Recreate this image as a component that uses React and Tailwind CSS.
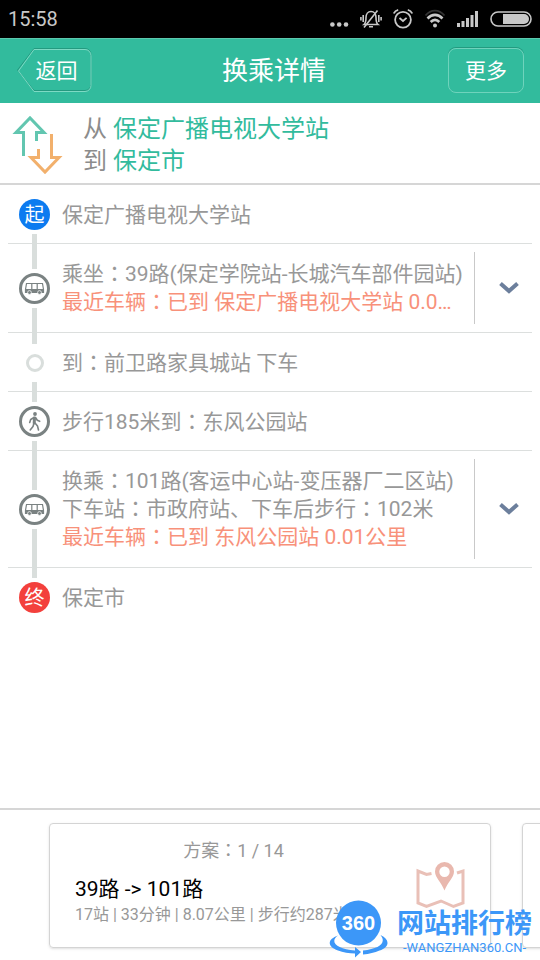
import { useState } from 'react';

const from = '保定广播电视大学站';
const to = '保定市';

const steps = [
  { id: 1, type: 'start', lines: ['保定广播电视大学站'] },
  {
    id: 2,
    type: 'bus',
    lines: ['乘坐：39路(保定学院站-长城汽车部件园站)'],
    nearest: '最近车辆：已到 保定广播电视大学站 0.01公里',
  },
  { id: 3, type: 'stop', lines: ['到：前卫路家具城站 下车'] },
  { id: 4, type: 'walk', lines: ['步行185米到：东风公园站'] },
  {
    id: 5,
    type: 'bus',
    lines: ['换乘：101路(客运中心站-变压器厂二区站)', '下车站：市政府站、下车后步行：102米'],
    nearest: '最近车辆：已到 东风公园站 0.01公里',
  },
  { id: 6, type: 'end', lines: ['保定市'] },
];

// The TC face centres the full-width colon in its cell
const Label = ({ text }) =>
  text.split('：').map((part, i) => (
    <span key={i}>
      {i > 0 && <span className="font-['Noto_Sans_CJK_TC',sans-serif] leading-none">：</span>}
      {part}
    </span>
  ));

const StatusBar = () => (
  <div className="flex h-[38px] items-center justify-between bg-black pr-2 pl-2 text-[#c8c8c8]">
    <span className="text-[20px] leading-none">15:58</span>
    <div className="flex items-center gap-[11px]">
      <svg className="h-5 w-[19px]" viewBox="0 0 19 20" fill="currentColor">
        <circle cx="2.4" cy="15.5" r="2.3" />
        <circle cx="9.2" cy="15.5" r="2.3" />
        <circle cx="16" cy="15.5" r="2.3" />
      </svg>
      <svg className="h-5 w-[22px]" viewBox="0 0 22 20" fill="none" stroke="currentColor" strokeWidth="1.6">
        <path d="M4 15.5h14c-1.8-1.5-2-3-2-7 0-3.500-2-6-5-6s-5 2.500-5 6c0 4-.2 5.500-2 7z" />
        <path d="M9 17.800h4M4 18.500L17.500 1.500M3.200 6v7M.9 8v3.500M18.800 6v7M21.100 8v3.500" />
      </svg>
      <svg className="h-5 w-5" viewBox="0 0 20 20" fill="none" stroke="currentColor" strokeWidth="1.8">
        <circle cx="10" cy="10.800" r="7.900" />
        <path d="M6.500 9l3.500 3 3.600-3.200M.8 4.500C1.600 2.700 3.300 1.300 5.200.9M19.200 4.500C18.400 2.700 16.700 1.300 14.800.9" />
      </svg>
      <svg className="h-5 w-[22px]" viewBox="0 0 22 20" fill="none" stroke="currentColor" strokeWidth="2.6">
        <path d="M1.500 6.500C7-.1 15 .1 20.500 6.500" stroke="#333" strokeWidth="1.8" />
        <path d="M3.500 9.500c4.500-4.800 10.500-4.800 15 0M6.700 13c2.600-2.800 6-2.800 8.600 0" />
        <circle cx="11" cy="16.500" r="2" fill="currentColor" stroke="none" />
      </svg>
      <svg className="h-5 w-[22px]" viewBox="0 0 22 20" fill="currentColor">
        <rect x="0" y="14" width="3" height="4" />
        <rect x="4.500" y="12" width="3" height="6" />
        <rect x="9" y="9" width="3" height="9" />
        <rect x="13.500" y="6" width="3" height="12" />
        <rect x="18" y="2" width="3" height="16" />
      </svg>
      <svg className="h-5 w-[42px]" viewBox="0 0 42 20">
        <rect x="1" y="3" width="40" height="14" rx="7" fill="none" stroke="currentColor" strokeWidth="1.6" />
        <path d="M13 5h21a5 5 0 0 1 0 10H13z" fill="currentColor" />
      </svg>
    </div>
  </div>
);

const Header = () => (
  <header className="flex h-[65px] items-center justify-between border-t border-[#5cc9ae] bg-[#32bb9d] px-4 pb-[2px] text-white">
    <button type="button" className="relative h-[46px] w-[76px] pt-[3px] pl-[5px] text-[21px]">
      <svg className="absolute inset-0" width="76" height="46" viewBox="0 0 76 46" fill="none">
        <path d="M18 1.500h51a6 6 0 0 1 6 6v30a6 6 0 0 1-6 6H18L1.500 23z" stroke="#249a80" />
        <path d="M18 2.500h51a6 6 0 0 1 6 6v30a6 6 0 0 1-6 6H18L2.500 24z" stroke="#7ddac4" />
      </svg>
      返回
    </button>
    <h1 className="pt-[3px] pl-2 text-[26px]">换乘详情</h1>
    <button
      type="button"
      className="h-[45px] w-[76px] rounded-lg border border-[#6fd3bc] pt-[3px] text-[21px] shadow-[0_-1px_0_#249a80]"
    >
      更多
    </button>
  </header>
);

const StepIcon = ({ type }) => {
  if (type === 'start' || type === 'end') {
    return (
      <span
        className={`flex size-[31px] items-center justify-center rounded-full text-[20px] leading-none text-white ${
          type === 'start' ? 'bg-[#0c7bf0]' : 'bg-[#f3403c]'
        }`}
      >
        {type === 'start' ? '起' : '终'}
      </span>
    );
  }
  if (type === 'stop') {
    return <span className="my-[6px] size-[18px] rounded-full border-3 border-[#d9dedc]" />;
  }
  return (
    <svg className="size-[31px]" viewBox="0 0 31 31" fill="none" stroke="#7a8282">
      <circle cx="15.500" cy="15.500" r="14" strokeWidth="3" />
      {type === 'bus' ? (
        <g>
          <path d="M7.500 10.500h16l1 6v3h-18v-3zM12.800 10.500v6M18.200 10.500v6" strokeWidth="1.200" />
          <path d="M6.500 16h18v3.500h-18z" fill="#7a8282" stroke="none" />
          <circle cx="10.500" cy="19.500" r="1.900" fill="#7a8282" stroke="#fff" strokeWidth=".7" />
          <circle cx="20.500" cy="19.500" r="1.900" fill="#7a8282" stroke="#fff" strokeWidth=".7" />
        </g>
      ) : (
        <g strokeLinecap="round" strokeLinejoin="round">
          <circle cx="16" cy="8" r="1.900" fill="#7a8282" stroke="none" />
          <path d="M15.500 12l-.3 5" strokeWidth="3" />
          <path d="M15 11.500l-3.300 2-1 3M16.500 11.500l1.800 2.800 2.400 1M15 17l-1 3.500-2.800 3.500M16 17l2.500 3 1 4" strokeWidth="1.600" />
        </g>
      )}
    </svg>
  );
};

const Step = ({ step, first, last }) => {
  const [open, setOpen] = useState(false);
  return (
    <li className={`mx-2 flex pl-[11px] ${last ? '' : 'border-b border-[#dcdfde]'}`}>
      <div className="-mb-px flex w-[31px] shrink-0 flex-col items-center gap-1">
        <span className={`w-[5px] flex-1 ${first ? '' : 'bg-[#d9dedc]'}`} />
        <StepIcon type={step.type} />
        <span className={`w-[5px] flex-1 ${last ? '' : 'bg-[#d9dedc]'}`} />
      </div>
      <div
        className={`min-w-0 flex-1 pr-[10px] pl-3 text-[21px] leading-7 text-[#989898] ${
          step.nearest ? 'py-4' : 'pt-4 pb-[14px]'
        }`}
      >
        {step.lines.map((line) => (
          <p key={line} className="truncate">
            <Label text={line} />
          </p>
        ))}
        {step.nearest && (
          <p className="truncate pr-1 text-[#f8917a]">
            <Label text={step.nearest} />
          </p>
        )}
      </div>
      {step.nearest && (
        <button
          type="button"
          aria-label="展开"
          aria-expanded={open}
          onClick={() => setOpen(!open)}
          className="my-2 flex w-[58px] shrink-0 items-center justify-center border-l border-[#c9c9c9] pl-[10px]"
        >
          <svg className="h-3 w-5" viewBox="0 0 20 12" fill="none" stroke="#6c7f9c" strokeWidth="4">
            <path d="M1.500 1.500L10 9l8.500-7.500" />
          </svg>
        </button>
      )}
    </li>
  );
};

const PlanCard = () => (
  <article className="flex h-[125px] w-[442px] shrink-0 items-center rounded border border-[#d4d4d4] pr-6 pl-[25px] shadow-sm">
    <div className="min-w-0 flex-1 pb-2 text-[#989898]">
      <p className="pr-[24px] text-center text-[18px] leading-7">
        <Label text="方案：1 / 14" />
      </p>
      <h2 className="mt-[10px] text-[21px] leading-7 text-black">39路 -&gt; 101路</h2>
      <p className="text-[16px] leading-6 whitespace-nowrap">17站 | 33分钟 | 8.07公里 | 步行约287米</p>
    </div>
    <svg className="h-[50px] w-[50px] shrink-0" viewBox="0 0 50 50" fill="none">
      <path d="M15.500 12.500l-5 1L2 10v32l8.500 3.500L25 40l12.500 5.500L47 42V10l-6 2" stroke="#e9c0b7" strokeWidth="3" />
      <path
        d="M28.500 1a9.500 9.500 0 0 0-9.500 9.500c0 6 6.500 11 9.500 19 3-8 9.500-13 9.500-19A9.500 9.500 0 0 0 28.500 1zm0 4.500a5.200 5.200 0 1 1 0 10.400 5.200 5.200 0 0 1 0-10.400z"
        fill="#e9b8ae"
        fillRule="evenodd"
      />
    </svg>
  </article>
);

const Watermark = () => (
  <div className="pointer-events-none absolute right-2 bottom-[2px] flex items-end gap-[9px] text-[#3c97f8]">
    <div className="relative h-[58px] w-[59px]">
      <svg width="59" height="58" viewBox="0 0 59 58">
        <circle cx="29.500" cy="23" r="22.500" fill="#3c97f8" />
        <path
          d="M9 35.500C-1 39 -3 46 9 50.500c5 2 11 3 17 3V57.500l6-5.500-6-5v3.500C8 49 0 42 9 35.500zM51.500 35c10 5 9 12-1 15.500-5 2-10 3.500-16.500 4v-4C50 49 58 43 51.500 35z"
          fill="#3c97f8"
        />
      </svg>
      <span className="absolute inset-x-0 top-[10px] text-center font-['Liberation_Sans_Narrow','Liberation_Sans',sans-serif] text-[20px] leading-[26px] font-bold text-white">
        360
      </span>
    </div>
    <div className="text-center">
      <p className="text-[27px] leading-7 font-bold">网站排行榜</p>
      <p className="text-[13px] leading-5">-WANGZHAN360.CN-</p>
    </div>
  </div>
);

const App = () => (
  <div className="relative flex min-h-screen flex-col overflow-hidden bg-white font-[Roboto,'Noto_Sans_CJK_SC',sans-serif]">
    <StatusBar />
    <Header />

    <section className="flex items-center border-b-2 border-[#d6d6d6] pt-[10px] pb-[6px] pl-3 text-[24px] leading-8">
      <svg className="h-[60px] w-[51px]" viewBox="0 0 51 60" fill="none" strokeWidth="3">
        <path d="M11.500 41V17.500H4L18 3l14 14.500h-7.500V26" stroke="#62c6b0" />
        <path d="M39.500 19v23.500H47L33 57 19 42.500h7.500V34" stroke="#f2b06c" />
      </svg>
      <div className="pl-5 text-[#32bb9d]">
        <p>
          <span className="text-[#8c8c8c]">从</span> {from}
        </p>
        <p>
          <span className="text-[#8c8c8c]">到</span> {to}
        </p>
      </div>
    </section>

    <ul className="flex-1">
      {steps.map((step, i) => (
        <Step key={step.id} step={step} first={i === 0} last={i === steps.length - 1} />
      ))}
    </ul>

    <footer className="flex gap-[31px] overflow-hidden border-t-2 border-[#d6d6d6] pt-[13px] pb-3 pl-[49px]">
      <PlanCard />
      <article className="h-[125px] w-[442px] shrink-0 rounded border border-[#d4d4d4] shadow-sm" />
    </footer>

    <Watermark />
  </div>
);

export default App;
